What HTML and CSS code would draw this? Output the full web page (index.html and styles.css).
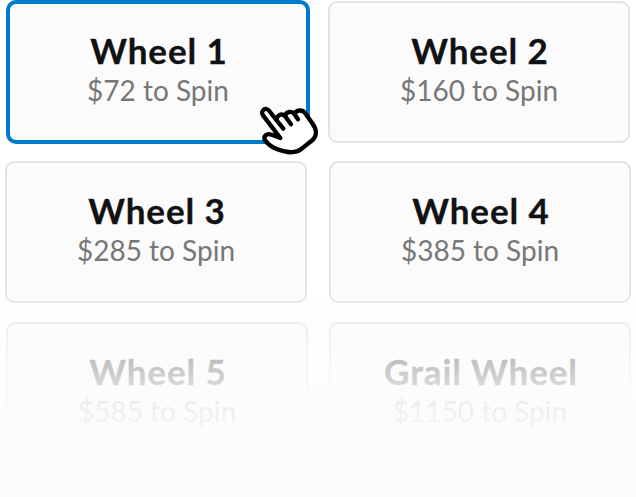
FILE: index.html
```html
<!DOCTYPE html>
<html lang="en">
<head>
    <meta charset="utf-8">
    <title>Wheels</title>
    <link rel="stylesheet" href="styles.css">
</head>
<body>
<div class="wheels">
    <div class="wheel-row row-first">
        <div class="wheel-card selected">
            <h2 class="wheel-title">Wheel 1</h2>
            <p class="wheel-price">$72 to Spin</p>
            <svg class="pointer" width="66" height="56" viewBox="0 0 198 168">
                <path d="M73 108 L21 40 C12 26 29 13 40 27 L61 54 C62 41 76 32 87 42 C91 28 107 26 115 36 C121 23 139 22 147 33 L169 64 C184 84 183 104 166 117 L141 137 C121 156 95 154 64 142 C45 135 35 125 28 116 C19 101 34 93 47 98 Z"/>
                <path d="M61 54 L82 80 M87 42 L105 67 M115 36 L126 52"/>
            </svg>
        </div>
        <div class="wheel-card">
            <h2 class="wheel-title">Wheel 2</h2>
            <p class="wheel-price">$160 to Spin</p>
        </div>
    </div>
    <div class="wheel-row row-second">
        <div class="wheel-card">
            <h2 class="wheel-title">Wheel 3</h2>
            <p class="wheel-price">$285 to Spin</p>
        </div>
        <div class="wheel-card">
            <h2 class="wheel-title">Wheel 4</h2>
            <p class="wheel-price">$385 to Spin</p>
        </div>
    </div>
    <div class="wheel-row row-third">
        <div class="wheel-card">
            <h2 class="wheel-title">Wheel 5</h2>
            <p class="wheel-price">$585 to Spin</p>
        </div>
        <div class="wheel-card">
            <h2 class="wheel-title">Grail Wheel</h2>
            <p class="wheel-price">$1150 to Spin</p>
        </div>
    </div>
    <div class="fade"></div>
</div>
</body>
</html>
```
FILE: styles.css
```css
* {
    box-sizing: border-box;
}

body {
    margin: 0;
    background-color: #ffffff;
    font-family: Lato, sans-serif;
}

.wheels {
    position: relative;
    display: flex;
    flex-direction: column;
    height: 497px;
    overflow: hidden;
}

.wheel-row {
    display: flex;
    align-items: center;
}

.row-first {
    gap: 18px;
    padding-left: 6px;
    margin-bottom: 17px;
}

.row-second {
    gap: 22px;
    padding-left: 5px;
    margin-bottom: 19px;
}

.row-third {
    gap: 21px;
    padding-left: 6px;
}

.wheel-card {
    flex: none;
    width: 302px;
    height: 142px;
    padding-top: 26px;
    border: 2px solid #e4e4e4;
    border-radius: 9px;
    background-color: #fbfbfb;
    text-align: center;
}

.wheel-card.selected {
    position: relative;
    width: 304px;
    height: 144px;
    padding-top: 25px;
    border: 4px solid #007acc;
    border-radius: 10px;
}

.wheel-title {
    margin: 0;
    padding-left: 2px;
    color: #111213;
    font-size: 35px;
    font-weight: bold;
    line-height: 42px;
    letter-spacing: 0.9px;
    -webkit-text-stroke: 0.3px #111213;
}

.wheel-price {
    margin: 0;
    color: #777777;
    font-size: 28px;
    line-height: 38px;
}

.pointer {
    position: absolute;
    left: 246px;
    top: 98px;
    fill: #ffffff;
    stroke: #000000;
    stroke-width: 13;
    stroke-linecap: round;
    stroke-linejoin: round;
}

/* hides the lower rows gradually */
.fade {
    position: absolute;
    left: 0;
    right: 0;
    bottom: 0;
    height: 207px;
    background: linear-gradient(rgba(252, 252, 252, 0), rgba(252, 252, 252, 0.74) 70px, rgba(252, 252, 252, 0.84) 94px, rgba(252, 252, 252, 0.92) 130px, #fcfcfc 172px);
}
```
